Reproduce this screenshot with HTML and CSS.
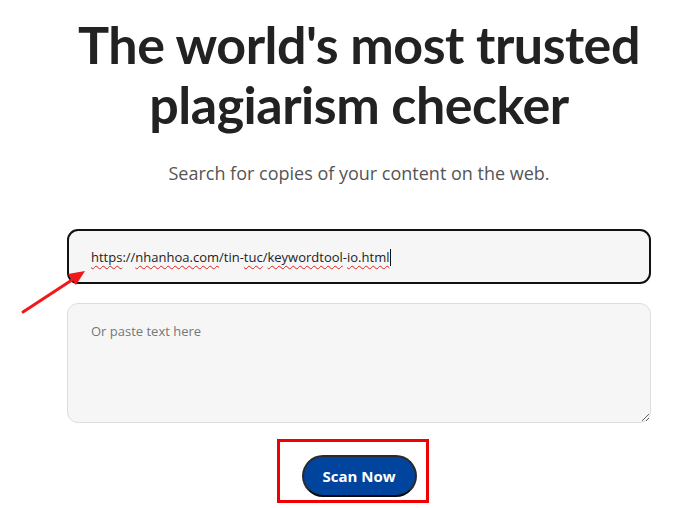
FILE: index.html
```html
<!DOCTYPE html>
<html lang="en">
<head>
    <meta charset="UTF-8">
    <meta name="viewport" content="width=device-width, initial-scale=1.0">
    <title>Plagiarism Checker</title>
    <link rel="stylesheet" href="styles.css">
</head>
<body>
    <div class="page">
        <h1 class="title">The world's most trusted plagiarism checker</h1>
        <p class="subtitle">Search for copies of your content on the web.</p>

        <div class="scan-form">
            <div class="url-field">
                <div class="url-input"><span class="typo">https</span>://<span class="typo">nhanhoa.com</span>/tin-<span class="typo">tuc</span>/<span class="typo">keywordtool</span>-<span class="typo">io.html</span><span class="caret"></span></div>
                <!-- chú thích: mũi tên đỏ -->
                <svg class="arrow" width="80" height="56" viewBox="0 0 80 56">
                    <line x1="4" y1="50" x2="56" y2="16" stroke="#f01818" stroke-width="3" stroke-linecap="round"/>
                    <polygon points="66,9 49,12 57,23" fill="#f01818"/>
                </svg>
            </div>
            <textarea class="text-input" placeholder="Or paste text here"></textarea>
            <div class="actions">
                <div class="scan-wrap">
                    <span class="highlight"></span>
                    <button class="scan-button">Scan Now</button>
                </div>
            </div>
        </div>
    </div>
</body>
</html>
```

FILE: styles.css
```css
body {
    margin: 0;
    background: #fff;
    font-family: "Open Sans", "Liberation Sans", sans-serif;
    color: #222;
}
.page {
    width: 584px;
    margin-left: 67px;
    padding-bottom: 30px;
    text-align: center;
}
.title {
    font-family: Lato, "Liberation Sans", sans-serif;
    font-weight: 700;
    font-size: 52px;
    line-height: 60px;
    letter-spacing: -0.5px;
    color: #222;
    margin: 14px 0 0;
}
.subtitle {
    font-size: 18px;
    color: #555;
    margin: 27px 0 0;
}
.scan-form {
    margin-top: 44px;
}
.url-field {
    position: relative;
}
.url-input {
    box-sizing: border-box;
    height: 55px;
    border: 2px solid #111;
    border-radius: 11px;
    background: #f6f6f6;
    padding: 16px 22px 0;
    text-align: left;
    font-size: 13px;
    line-height: 20px;
    color: #222;
}
.typo {
    text-decoration: underline wavy #e02020;
    text-decoration-thickness: 1px;
    text-underline-offset: 3px;
}
.caret {
    display: inline-block;
    width: 1px;
    height: 17px;
    background: #111;
    vertical-align: -4px;
    margin-left: 1px;
}
.arrow {
    position: absolute;
    left: -48px;
    top: 33px;
}
.text-input {
    display: block;
    box-sizing: border-box;
    width: 100%;
    height: 120px;
    margin-top: 19px;
    border: 1px solid #ddd;
    border-radius: 11px;
    background: #f6f6f6;
    padding: 18px 23px;
    font-family: "Open Sans", "Liberation Sans", sans-serif;
    font-size: 13px;
    color: #222;
}
.text-input::placeholder {
    color: #777;
}
.actions {
    margin-top: 32px;
}
.scan-wrap {
    position: relative;
    display: inline-block;
    vertical-align: top;
}
.scan-button {
    display: block;
    width: 115px;
    height: 42px;
    border: 2px solid #2a2a2a;
    border-bottom-color: #0a0a0a;
    border-radius: 21px;
    background: #00449e;
    color: #fff;
    font-family: "Open Sans", "Liberation Sans", sans-serif;
    font-size: 15px;
    font-weight: 700;
    cursor: pointer;
}
.highlight {
    position: absolute;
    left: -25px;
    top: -16px;
    width: 146px;
    height: 58px;
    border: 3px solid #f00000;
}
```
